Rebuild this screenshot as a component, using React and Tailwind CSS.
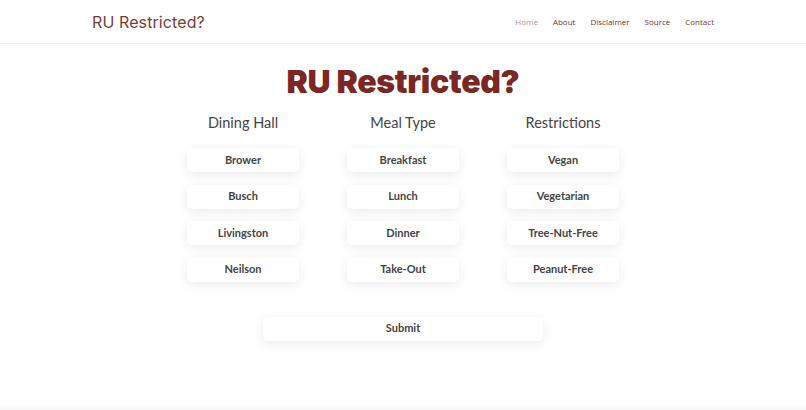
import React from "react";

const columns = [
  { title: "Dining Hall", items: ["Brower", "Busch", "Livingston", "Neilson"] },
  { title: "Meal Type", items: ["Breakfast", "Lunch", "Dinner", "Take-Out"] },
  { title: "Restrictions", items: ["Vegan", "Vegetarian", "Tree-Nut-Free", "Peanut-Free"] },
];

const nav = ["Home", "About", "Disclaimer", "Source", "Contact"];

function OptionButton({ label, className = "w-[112px]" }) {
  return (
    <button
      className={`${className} h-[24px] rounded-[5px] bg-white text-[11px] font-bold text-[#444] shadow-[0_3px_12px_rgba(0,0,0,0.08)] flex items-center justify-center`}
      style={{ fontFamily: "Lato, 'Open Sans', sans-serif" }}
    >
      {label}
    </button>
  );
}

export default function App() {
  return (
    <div className="w-[806px] h-[410px] bg-white flex flex-col overflow-hidden">
      <header className="h-[44px] shrink-0 border-b border-[#f1f1f1] flex items-center justify-between pl-[92px] pr-[92px]">
        <div
          className="text-[16px] text-[#7a3b38] tracking-[0.1px]"
          style={{ fontFamily: "Inter, 'Noto Sans', sans-serif" }}
        >
          RU Restricted?
        </div>
        <nav className="flex gap-[15px] text-[8px]" style={{ fontFamily: "'Open Sans', sans-serif" }}>
          {nav.map((n, i) => (
            <span key={n} className={i === 0 ? "text-[#b8908d]" : "text-[#7a2f2c]"}>
              {n}
            </span>
          ))}
        </nav>
      </header>

      <main className="flex-1 flex flex-col items-center">
        <h1
          className="mt-[18px] text-[32px] leading-[40px] font-black text-[#7b2723] tracking-[-0.3px]"
          style={{ fontFamily: "Inter, 'Noto Sans', sans-serif" }}
        >
          RU Restricted?
        </h1>
        <div className="mt-[10px] flex gap-[48px]">
          {columns.map((c) => (
            <div key={c.title} className="w-[112px] flex flex-col items-center">
              <div
                className="h-[22px] text-[14.5px] text-[#444] whitespace-nowrap flex items-center"
                style={{ fontFamily: "Lato, 'Open Sans', sans-serif" }}
              >
                {c.title}
              </div>
              <div className="mt-[14px] flex flex-col gap-[12.5px]">
                {c.items.map((it) => (
                  <OptionButton key={it} label={it} />
                ))}
              </div>
            </div>
          ))}
        </div>
        <div className="mt-[35px]">
          <OptionButton label="Submit" className="w-[280px]" />
        </div>
      </main>
      <div className="h-[6px] shrink-0 bg-gradient-to-b from-white to-[#f7f7f7]" />
    </div>
  );
}
